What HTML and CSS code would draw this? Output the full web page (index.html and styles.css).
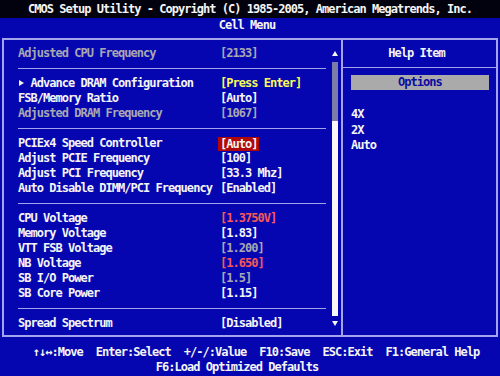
FILE: index.html
```html
<!DOCTYPE html>
<html lang="en">

<head>
    <meta charset="UTF-8">
    <meta name="viewport" content="width=device-width, initial-scale=1.0">
    <title>CMOS Setup Utility</title>
    <link rel="stylesheet" href="styles.css">
</head>

<body>
    <div class="screen">
        <div class="titlebar">CMOS Setup Utility - Copyright (C) 1985-2005, American Megatrends, Inc.</div>
        <div class="menubar">Cell Menu</div>

        <div class="frame">
            <div class="main">
                <div class="list">
                    <div class="row dim"><span class="label">Adjusted CPU Frequency</span><span>[2133]</span></div>
                    <div class="sep"></div>
                    <div class="row"><span class="label"><span class="arrow"></span>Advance DRAM Configuration</span><span class="yellow">[Press Enter]</span></div>
                    <div class="row"><span class="label">FSB/Memory Ratio</span><span>[Auto]</span></div>
                    <div class="row dim"><span class="label">Adjusted DRAM Frequency</span><span>[1067]</span></div>
                    <div class="sep"></div>
                    <div class="row"><span class="label">PCIEx4 Speed Controller</span><span class="selected">[Auto]</span></div>
                    <div class="row"><span class="label">Adjust PCIE Frequency</span><span>[100]</span></div>
                    <div class="row"><span class="label">Adjust PCI Frequency</span><span>[33.3 Mhz]</span></div>
                    <div class="row"><span class="label">Auto Disable DIMM/PCI Frequency</span><span>[Enabled]</span></div>
                    <div class="sep"></div>
                    <div class="row"><span class="label">CPU Voltage</span><span class="red">[1.3750V]</span></div>
                    <div class="row"><span class="label">Memory Voltage</span><span>[1.83]</span></div>
                    <div class="row"><span class="label">VTT FSB Voltage</span><span class="dim">[1.200]</span></div>
                    <div class="row"><span class="label">NB Voltage</span><span class="red">[1.650]</span></div>
                    <div class="row"><span class="label">SB I/O Power</span><span class="dim">[1.5]</span></div>
                    <div class="row"><span class="label">SB Core Power</span><span>[1.15]</span></div>
                    <div class="sep"></div>
                    <div class="row"><span class="label">Spread Spectrum</span><span>[Disabled]</span></div>
                </div>
                <div class="scroll">
                    <div class="scroll-btn"><span class="tri-up"></span></div>
                    <div class="track">
                        <div class="track-gray"></div>
                        <div class="track-thumb"></div>
                    </div>
                    <div class="scroll-btn"><span class="tri-down"></span></div>
                </div>
            </div>

            <div class="help">
                <div class="help-title">Help Item</div>
                <div class="options">Options</div>
                <div class="help-list">
                    <div>4X</div>
                    <div>2X</div>
                    <div>Auto</div>
                </div>
            </div>
        </div>

        <div class="footer">
            <div class="keys">
                <span>↑↓↔:Move</span>
                <span>Enter:Select</span>
                <span>+/-/:Value</span>
                <span>F10:Save</span>
                <span>ESC:Exit</span>
                <span>F1:General Help</span>
            </div>
            <div class="keys keys-second">
                <span>F6:Load Optimized Defaults</span>
            </div>
        </div>
    </div>
</body>

</html>
```

FILE: styles.css
```css
body {
    margin: 0;
    background-color: #0606b0;
    font-family: "DejaVu Sans Mono", "Liberation Mono", monospace;
    font-weight: bold;
    font-size: 12px;
    letter-spacing: -0.97px;
    color: #f4f4f4;
}

.screen {
    display: grid;
    grid-template-rows: 18px 20px 299px 39px;
    width: 500px;
    height: 376px;
    overflow: hidden;
}

.titlebar {
    line-height: 18px;
    background-color: #02020e;
    text-align: center;
    white-space: pre;
}

.menubar {
    line-height: 15px;
    text-align: center;
    padding-right: 6px;
}

.frame {
    display: flex;
    margin: 0 2px;
    border: 2px solid #a4a4ec;
    overflow: hidden;
}

.main {
    display: flex;
    width: 337px;
    padding-left: 14px;
    box-sizing: border-box;
}

.list {
    width: 308px;
    padding-top: 6px;
}

.row {
    display: flex;
    height: 15px;
    line-height: 15px;
    white-space: pre;
}

.label {
    width: 202px;
    flex-shrink: 0;
}

.arrow {
    display: inline-block;
    width: 12.5px;
    height: 15px;
    vertical-align: top;
    position: relative;
}

.arrow::after {
    content: "";
    position: absolute;
    left: 1px;
    top: 4px;
    border-left: 5px solid #f4f4f4;
    border-top: 3.5px solid transparent;
    border-bottom: 3.5px solid transparent;
}

.sep {
    height: 7px;
    margin-bottom: 7px;
    border-bottom: 1px solid #a4a4ec;
}

.dim {
    color: #a8a8b0;
}

.yellow {
    color: #f8f858;
}

.red {
    color: #f85858;
}

.selected {
    display: inline-block;
    height: 14px;
    line-height: 14px;
    margin-top: 1px;
    margin-left: -2px;
    padding: 0 1px 0 2px;
    background-color: #b00808;
}

.scroll {
    width: 6px;
    margin-left: 6px;
    padding-top: 6px;
}

.scroll-btn {
    height: 15px;
    display: flex;
    justify-content: center;
    align-items: center;
}

.tri-up {
    border-bottom: 5px solid #f4f4f4;
    border-left: 3px solid transparent;
    border-right: 3px solid transparent;
}

.tri-down {
    border-top: 5px solid #f4f4f4;
    border-left: 3px solid transparent;
    border-right: 3px solid transparent;
}

.track {
    height: 254px;
    margin-top: 1px;
}

.track-gray {
    height: 59px;
    background-color: #7c7ca8;
}

.track-thumb {
    height: 195px;
    background-color: #f8f8f8;
}

.help {
    flex: 1;
    border-left: 2px solid #a4a4ec;
}

.help-title {
    height: 28px;
    padding-top: 6px;
    box-sizing: border-box;
    line-height: 15px;
    text-align: center;
    padding-right: 6px;
    border-bottom: 1px solid #a4a4ec;
}

.options {
    margin: 7px 7px 0 8px;
    height: 15px;
    line-height: 15px;
    background-color: #aaaaaa;
    color: #0a0aa0;
    text-align: center;
}

.help-list {
    margin-top: 17px;
    padding-left: 8px;
    line-height: 15.5px;
}

.footer {
    padding-top: 8px;
}

.keys {
    display: flex;
    justify-content: center;
    gap: 13px;
    height: 15px;
    line-height: 15px;
    padding-left: 12px;
    white-space: pre;
}

.keys-second {
    padding-left: 0;
    padding-right: 26px;
}
```
